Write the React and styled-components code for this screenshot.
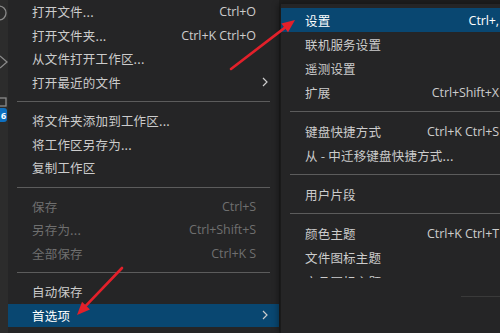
import React from "react";
import styled, { createGlobalStyle } from "styled-components";

const GlobalStyle = createGlobalStyle`
  html, body {
    margin: 0;
    padding: 0;
    background: #1e1e1e;
    overflow: hidden;
  }
  body {
    font-family: "Noto Sans CJK SC", "Noto Sans", sans-serif;
  }
`;

const Screen = styled.div`
  position: relative;
  width: 500px;
  height: 333px;
  overflow: hidden;
  display: flex;
  flex-direction: row;
  align-items: flex-start;
  background: #1e1e1e;
`;

const ActivityBar = styled.div`
  width: 8px;
  height: 333px;
  flex-shrink: 0;
  background: #2c2c2c;
`;

const Menu = styled.div`
  width: ${(p) => p.width}px;
  flex-shrink: 0;
  background: #252526;
  margin-top: ${(p) => p.offset || 0}px;
  margin-left: ${(p) => (p.sub ? 1 : 0)}px;
  padding-top: ${(p) => p.pad || 0}px;
  height: ${(p) => 333 - (p.offset || 0) - (p.pad || 0)}px;
  border-left: ${(p) => (p.sub ? "1px solid #1a1a1a" : "none")};
  box-shadow: ${(p) => (p.sub ? "-2px 0 6px rgba(0,0,0,0.35)" : "none")};
  color: #cccccc;
  font-size: 12.5px;
`;

const Row = styled.div`
  display: flex;
  align-items: center;
  height: ${(p) => p.h}px;
  padding-left: 24px;
  background: ${(p) => (p.active ? "#094771" : "transparent")};
  color: ${(p) => (p.disabled ? "#6f6f6f" : p.active ? "#ffffff" : "#cccccc")};
  white-space: nowrap;
`;

const Label = styled.span`
  flex: 1;
  letter-spacing: 0.2px;
`;

const Shortcut = styled.span`
  font-family: "Open Sans", "Noto Sans", sans-serif;
  font-size: 12.5px;
  letter-spacing: -0.1px;
`;

const ChevronSlot = styled.span`
  width: 23px;
  flex-shrink: 0;
  display: flex;
  align-items: center;
  padding-left: 6px;
  box-sizing: border-box;
`;

const Separator = styled.div`
  height: 15px;
  display: flex;
  align-items: center;
  padding: 0 ${(p) => p.right ?? 9}px 0 ${(p) => p.left ?? 9}px;
  margin-top: ${(p) => p.gap || 0}px;
  &::after {
    content: "";
    flex: 1;
    height: 1px;
    background: ${(p) => p.color || "#5c5c5c"};
  }
`;

const Clipped = styled.div`
  height: ${(p) => p.h}px;
  overflow: hidden;
`;

const Overlay = styled.svg`
  position: absolute;
  left: 0;
  top: 0;
  pointer-events: none;
`;

const Chevron = () => (
  <svg width="6" height="10" viewBox="0 0 6 10">
    <path d="M1 1 L5 5 L1 9" fill="none" stroke="#cccccc" strokeWidth="1.2" />
  </svg>
);

const Item = ({ h, label, shortcut, sub, active, disabled }) => (
  <Row h={h} active={active} disabled={disabled}>
    <Label>{label}</Label>
    {shortcut && <Shortcut>{shortcut}</Shortcut>}
    <ChevronSlot>{sub && <Chevron />}</ChevronSlot>
  </Row>
);

const fileMenu = [
  { label: "打开文件...", shortcut: "Ctrl+O" },
  { label: "打开文件夹...", shortcut: "Ctrl+K Ctrl+O" },
  { label: "从文件打开工作区..." },
  { label: "打开最近的文件", sub: true },
  "sep",
  { label: "将文件夹添加到工作区..." },
  { label: "将工作区另存为..." },
  { label: "复制工作区" },
  "sep",
  { label: "保存", shortcut: "Ctrl+S", disabled: true },
  { label: "另存为...", shortcut: "Ctrl+Shift+S", disabled: true },
  { label: "全部保存", shortcut: "Ctrl+K S", disabled: true },
  "sep",
  { label: "自动保存" },
  { label: "首选项", sub: true, active: true },
];

const prefMenu = [
  { label: "设置", shortcut: "Ctrl+,", active: true },
  { label: "联机服务设置" },
  { label: "遥测设置" },
  { label: "扩展", shortcut: "Ctrl+Shift+X" },
  "sep",
  { label: "键盘快捷方式", shortcut: "Ctrl+K Ctrl+S" },
  { label: "从 - 中迁移键盘快捷方式..." },
  "sep",
  { label: "用户片段" },
  "sep",
  { label: "颜色主题", shortcut: "Ctrl+K Ctrl+T" },
  { label: "文件图标主题" },
];

const renderItems = (items, h) =>
  items.map((it, i) =>
    it === "sep" ? <Separator key={i} /> : <Item key={i} h={h} {...it} />
  );

const ActivityIcons = () => (
  <svg width="8" height="333" viewBox="0 0 8 333">
    <circle cx="-1" cy="13" r="7" fill="none" stroke="#8a8a8a" strokeWidth="1.3" />
    <path d="M0 56 L7 62 L0 68" fill="none" stroke="#8a8a8a" strokeWidth="1.3" />
    <rect x="-6" y="98" width="12" height="8" fill="none" stroke="#8a8a8a" strokeWidth="1.3" />
    <rect x="-4" y="108" width="11" height="14" rx="3" fill="#0e70c0" />
    <text x="3.5" y="119" fontSize="9" fontWeight="bold" fill="#ffffff" textAnchor="middle" fontFamily="Noto Sans, sans-serif">6</text>
  </svg>
);

const Arrow = ({ x1, y1, x2, y2 }) => {
  const a = Math.atan2(y2 - y1, x2 - x1);
  const len = 13;
  const w = 5.5;
  const bx = x2 - len * Math.cos(a);
  const by = y2 - len * Math.sin(a);
  const px = -Math.sin(a) * w;
  const py = Math.cos(a) * w;
  return (
    <g>
      <line x1={x1} y1={y1} x2={bx} y2={by} stroke="#e3202a" strokeWidth="2.6" strokeLinecap="round" />
      <polygon points={`${x2},${y2} ${bx + px},${by + py} ${bx - px},${by - py}`} fill="#e3202a" />
    </g>
  );
};

const App = () => (
  <>
    <GlobalStyle />
    <Screen>
      <ActivityBar>
        <ActivityIcons />
      </ActivityBar>
      <Menu width={271}>{renderItems(fileMenu, 23.5)}</Menu>
      <Menu width={241} offset={4} pad={4} sub>
        {renderItems(prefMenu, 24)}
        <Clipped h={9}>
          <Item h={24} label="产品图标主题" />
        </Clipped>
        <Separator left={180} right={0} color="#3a3a3a" gap={11} />
      </Menu>
      <Overlay width="500" height="333">
        <Arrow x1={231} y1={69} x2={295} y2={20} />
        <Arrow x1={122} y1={268} x2={77} y2={315} />
      </Overlay>
    </Screen>
  </>
);

export default App;
